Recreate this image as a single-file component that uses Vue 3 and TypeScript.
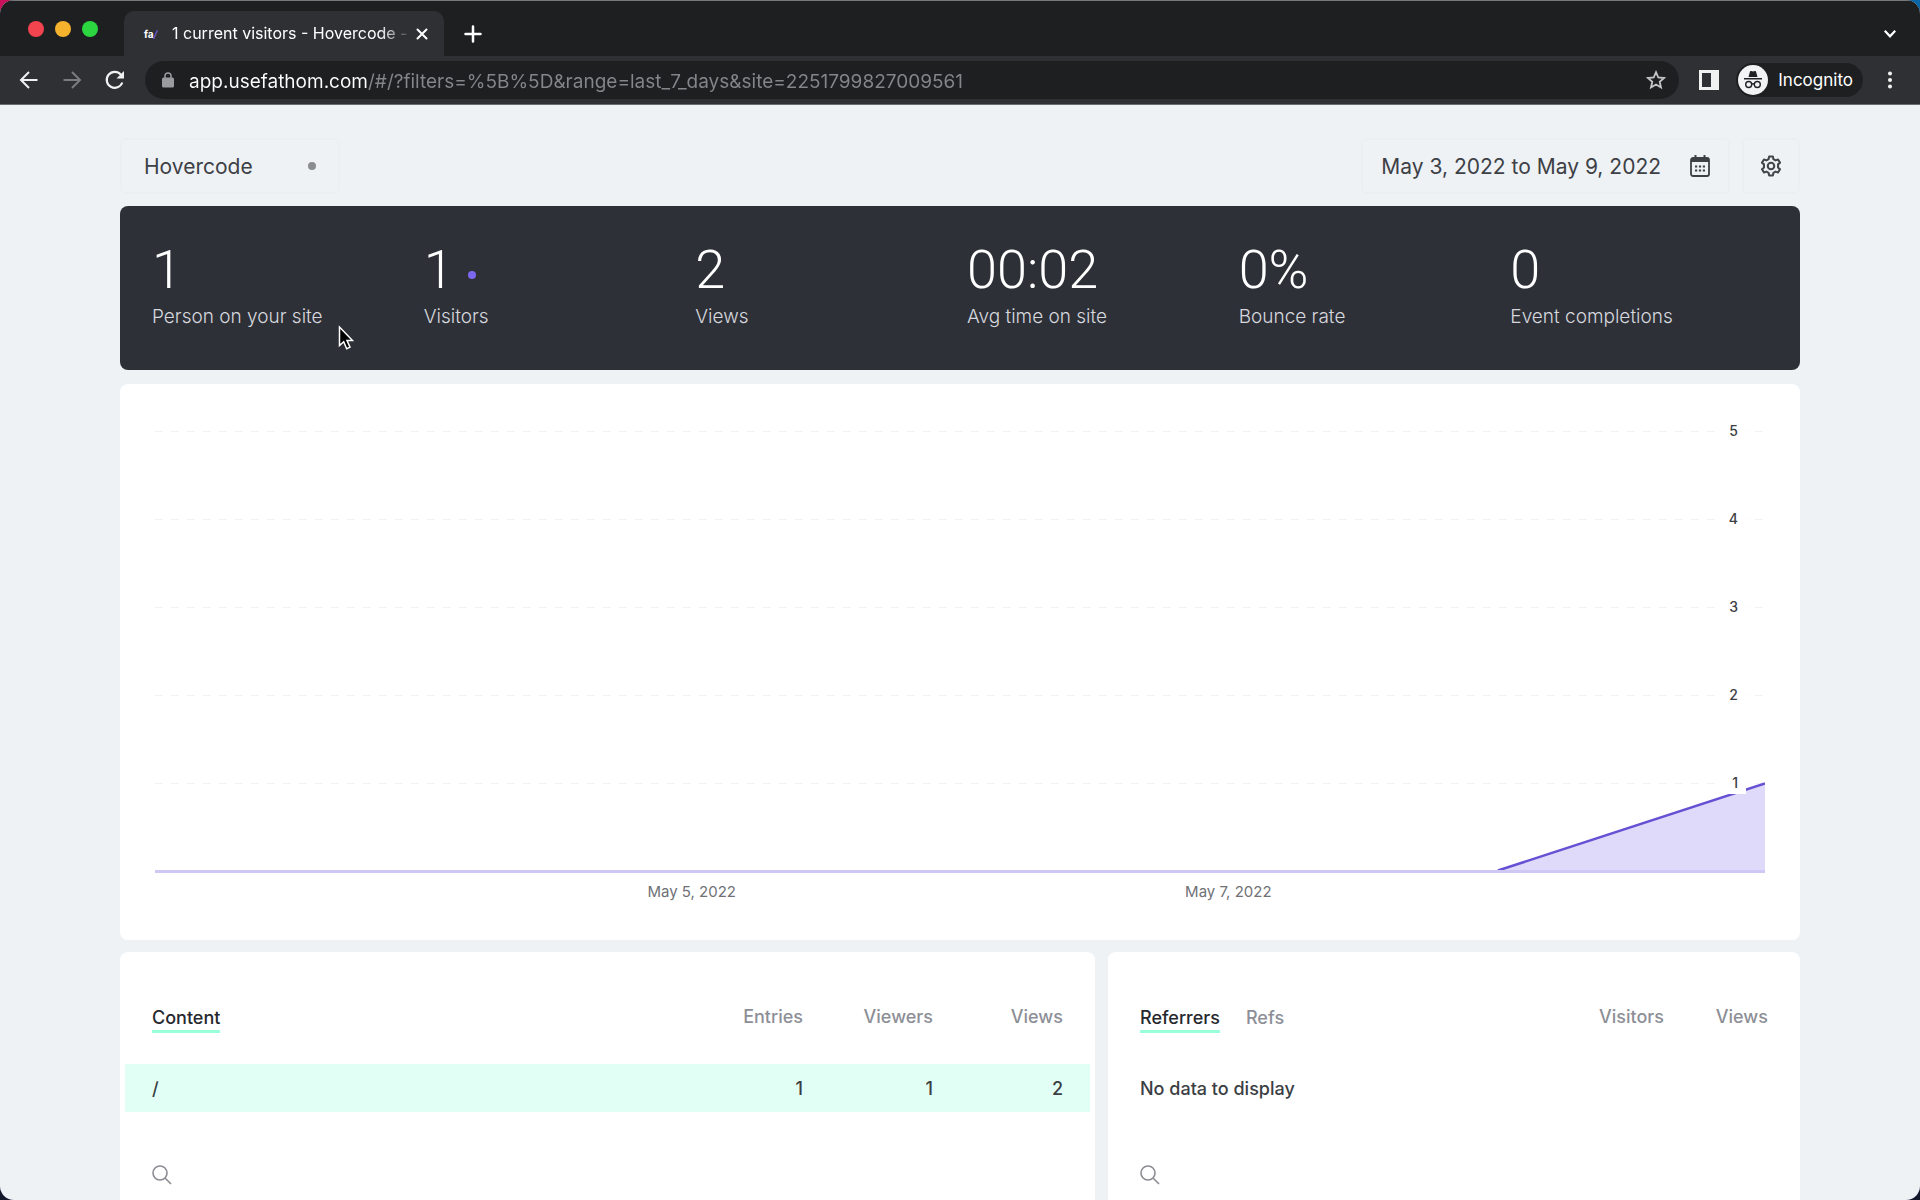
<script setup lang="ts">
import { ref } from 'vue'

interface Stat {
  value: string
  label: string
  live?: boolean
}

const stats: Stat[] = [
  { value: '1', label: 'Person on your site' },
  { value: '1', label: 'Visitors', live: true },
  { value: '2', label: 'Views' },
  { value: '00:02', label: 'Avg time on site' },
  { value: '0%', label: 'Bounce rate' },
  { value: '0', label: 'Event completions' },
]

const ticks: number[] = [5, 4, 3, 2, 1]
const dates: string[] = ['May 5, 2022', 'May 7, 2022']
const pages = [{ path: '/', entries: 1, viewers: 1, views: 2 }]
const address = ref('app.usefathom.com/#/?filters=%5B%5D&range=last_7_days&site=2251799827009561')
</script>

<template>
  <div class="desktop">
    <div class="window">
      <header class="tabstrip">
        <div class="lights">
          <button class="light red" aria-label="Close window"></button>
          <button class="light yellow" aria-label="Minimise window"></button>
          <button class="light green" aria-label="Zoom window"></button>
        </div>
        <div class="tab">
          <span class="favicon">fa<i>/</i></span>
          <span class="tab-title">1 current visitors - Hovercode -</span>
          <button class="plain tab-close" aria-label="Close tab">
            <svg width="12" height="12" viewBox="0 0 12 12"><path d="M1.5 1.5l9 9M10.5 1.5l-9 9" stroke="#fff" stroke-width="2" stroke-linecap="round" /></svg>
          </button>
        </div>
        <button class="plain new-tab" aria-label="New tab">
          <svg width="18" height="18" viewBox="0 0 18 18"><path d="M9 1.500v15M1.500 9h15" stroke="#fff" stroke-width="2.500" stroke-linecap="round" /></svg>
        </button>
        <button class="plain tab-search" aria-label="Search tabs">
          <svg width="14" height="10" viewBox="0 0 14 10"><path d="M1.800 1.800L7 7.300l5.200-5.500" fill="none" stroke="#fff" stroke-width="2.200" /></svg>
        </button>
      </header>

      <div class="toolbar">
        <nav class="nav">
          <button class="plain" aria-label="Back">
            <svg width="20" height="20" viewBox="0 0 20 20"><path d="M18.500 10H2.500M10 2L2 10l8 8" fill="none" stroke="#f1f1f2" stroke-width="2" /></svg>
          </button>
          <button class="plain" aria-label="Forward">
            <svg width="20" height="20" viewBox="0 0 20 20"><path d="M1.500 10h16M10 2l8 8-8 8" fill="none" stroke="#7b7c7f" stroke-width="2" /></svg>
          </button>
          <button class="plain" aria-label="Reload">
            <svg width="20" height="20" viewBox="0 0 20 20"><path d="M17.300 12.500A8 8 0 1 1 15.800 4.600L17 5.800" fill="none" stroke="#f1f1f2" stroke-width="2.200" /><path d="M19 1v7.500h-7.500z" fill="#f1f1f2" /></svg>
          </button>
        </nav>
        <div class="omnibox">
          <svg class="lock" width="12" height="16" viewBox="0 0 12 16"><rect x="0" y="5.500" width="12" height="10" rx="1.500" fill="#9a9b9e" /><path d="M3 6V4a3 3 0 0 1 6 0v2" fill="none" stroke="#9a9b9e" stroke-width="1.500" /></svg>
          <input v-model="address" class="address" type="text" aria-label="Address" spellcheck="false" />
          <button class="plain" aria-label="Bookmark this page">
            <svg width="20" height="20" viewBox="0 0 20 20"><path d="M10 2.200l2.300 5.300 5.700.5-4.300 3.800 1.300 5.700-5-3-5 3 1.300-5.700L2 8l5.700-.5z" fill="none" stroke="#c4c5c7" stroke-width="1.800" /></svg>
          </button>
        </div>
        <button class="plain" aria-label="Side panel">
          <svg width="20" height="20" viewBox="0 0 20 20"><path d="M0 0h20v20H0zM3 3v14h9V3z" fill="#f1f1f2" fill-rule="evenodd" /></svg>
        </button>
        <button class="incognito">
          <svg width="30" height="30" viewBox="0 0 30 30">
            <circle cx="15" cy="15" r="15" fill="#f1f3f4" />
            <path d="M10.500 12l1.500-5.500q.3-.8 1.200-.5l1.800.5 1.800-.5q.9-.3 1.200.5l1.500 5.500zM6 13h18v1.400H6z" fill="#202124" />
            <g fill="none" stroke="#202124" stroke-width="1.400"><circle cx="10.700" cy="19.500" r="3" /><circle cx="19.300" cy="19.500" r="3" /><path d="M13.700 19.200q1.300-.8 2.600 0" /></g>
          </svg>
          Incognito
        </button>
        <button class="plain" aria-label="Menu">
          <svg width="6" height="18" viewBox="0 0 6 18"><g fill="#f1f1f2"><circle cx="3" cy="2.500" r="2" /><circle cx="3" cy="9" r="2" /><circle cx="3" cy="15.500" r="2" /></g></svg>
        </button>
      </div>

      <main class="page">
        <div class="controls">
          <button class="control site">Hovercode <span class="dot"></span></button>
          <div class="right-controls">
            <button class="control range">
              May 3, 2022 to May 9, 2022
              <svg width="20" height="22" viewBox="0 0 20 22">
                <path d="M3 3h14a2 2 0 0 1 2 2v14a2 2 0 0 1-2 2H3a2 2 0 0 1-2-2V5a2 2 0 0 1 2-2z" fill="none" stroke="#3d4045" stroke-width="1.800" />
                <path d="M1 3.500h18V7H1zM4.500 0h2v4h-2zM13.500 0h2v4h-2z" fill="#3d4045" />
                <path d="M5 11.500h2.200M8.900 11.500h2.200M12.800 11.500H15M5 15.500h2.200M8.900 15.500h2.200M12.800 15.500H15" stroke="#3d4045" stroke-width="2.200" />
              </svg>
            </button>
            <button class="control settings" aria-label="Settings">
              <svg width="26" height="26" viewBox="0 0 24 24" fill="none" stroke="#43464b" stroke-width="1.900" stroke-linejoin="round">
                <path d="M9.800 4.600L10.300 2.300h3.400l.5 2.300 2 1.200 2.300-.8 1.800 2.900-1.800 1.600v2.800l1.800 1.700-1.800 2.900-2.300-.7-2 1.200-.5 2.300h-3.400l-.5-2.300-2-1.200-2.300.7L3.700 14l1.800-1.700V9.500L3.700 7.900 5.500 5l2.300.8z" transform="translate(0 1)" />
                <circle cx="12" cy="12" r="3" />
              </svg>
            </button>
          </div>
        </div>

        <section class="stats">
          <div v-for="s in stats" :key="s.label" class="stat">
            <div class="value">{{ s.value }}<span v-if="s.live" class="live"></span></div>
            <div class="label">{{ s.label }}</div>
          </div>
          <svg class="cursor" width="16" height="26" viewBox="0 0 16 26"><path d="M1.500 2v18.500l4.200-3.800 3 7 3.300-1.500-3-6.700h5.500z" fill="#000" stroke="#fff" stroke-width="1.500" /></svg>
        </section>

        <section class="card chart">
          <div class="plot">
            <svg class="lines" viewBox="0 0 1610 442" preserveAspectRatio="none">
              <path d="M0 .5H1610M0 88.500H1610M0 176.500H1610M0 264.500H1610M0 352.500H1610" stroke="#f3f3f4" stroke-width="1" stroke-dasharray="8 8" />
              <path d="M1344 440L1610 352.500V440z" fill="#dfd9fa" />
              <path d="M1343 439.500L1610 352.500" stroke="#6551d3" stroke-width="2.500" />
              <path d="M0 440.500H1610" stroke="#cfc7f4" stroke-width="3" />
            </svg>
            <div class="ticks">
              <span v-for="t in ticks" :key="t">{{ t }}</span>
            </div>
          </div>
          <div class="dates">
            <span v-for="d in dates" :key="d">{{ d }}</span>
          </div>
        </section>

        <div class="panels">
          <section class="card panel content">
            <table>
              <thead>
                <tr>
                  <th class="lead"><button class="tabbtn active">Content</button></th>
                  <th>Entries</th>
                  <th>Viewers</th>
                  <th>Views</th>
                </tr>
              </thead>
              <tbody>
                <tr v-for="p in pages" :key="p.path" class="hit">
                  <td class="lead"><a href="#/">{{ p.path }}</a></td>
                  <td>{{ p.entries }}</td>
                  <td>{{ p.viewers }}</td>
                  <td>{{ p.views }}</td>
                </tr>
              </tbody>
            </table>
            <button class="plain search" aria-label="Search content">
              <svg width="20" height="20" viewBox="0 0 20 20"><g fill="none" stroke="#8b8c92" stroke-width="1.600"><circle cx="8" cy="8" r="7" /><path d="M13 13l6 6" /></g></svg>
            </button>
          </section>

          <section class="card panel referrers">
            <table>
              <thead>
                <tr>
                  <th class="lead">
                    <button class="tabbtn active">Referrers</button>
                    <button class="tabbtn">Refs</button>
                  </th>
                  <th>Visitors</th>
                  <th>Views</th>
                </tr>
              </thead>
              <tbody>
                <tr>
                  <td class="lead" colspan="3">No data to display</td>
                </tr>
              </tbody>
            </table>
            <button class="plain search" aria-label="Search referrers">
              <svg width="20" height="20" viewBox="0 0 20 20"><g fill="none" stroke="#8b8c92" stroke-width="1.600"><circle cx="8" cy="8" r="7" /><path d="M13 13l6 6" /></g></svg>
            </button>
          </section>
        </div>
      </main>
    </div>
  </div>
</template>

<style>
body {
  margin: 0;
  background: #14182c;
}
</style>

<style scoped>
* {
  box-sizing: border-box;
}
.desktop {
  height: 100vh;
  background:
    linear-gradient(#c9105a, #c9105a) left top / 20px 20px no-repeat,
    linear-gradient(#0b66a8, #0b66a8) right top / 20px 20px no-repeat,
    #14182c;
  font-family: Inter, 'Liberation Sans', sans-serif;
}
.window {
  height: 100%;
  display: flex;
  flex-direction: column;
  overflow: hidden;
  border-radius: 14px;
  background: #eef2f5;
}
button {
  font: inherit;
  border: 0;
  padding: 0;
  margin: 0;
  background: none;
  color: inherit;
  cursor: pointer;
}
.plain {
  display: flex;
  align-items: center;
  justify-content: center;
}
svg {
  display: block;
  flex: none;
}

/* Browser chrome */
.tabstrip {
  height: 56px;
  flex: none;
  display: flex;
  align-items: flex-end;
  padding-right: 23px;
  background: #1e1f21;
  border-top: 1px solid #77787a;
}
.lights {
  width: 124px;
  height: 55px;
  display: flex;
  align-items: center;
  gap: 11px;
  padding-left: 28px;
}
.light {
  width: 16px;
  height: 16px;
  border-radius: 50%;
}
.red { background: #f1444f; }
.yellow { background: #f5b32d; }
.green { background: #2bd640; }
.tab {
  width: 320px;
  height: 45px;
  display: flex;
  align-items: center;
  padding: 0 16px 0 20px;
  border-radius: 10px 10px 0 0;
  background: #2f3034;
  color: #fff;
}
.favicon {
  width: 28px;
  font-size: 10px;
  font-weight: 700;
}
.favicon i {
  color: #6d5cd8;
}
.tab-title {
  flex: 1;
  padding-bottom: 2px;
  white-space: nowrap;
  font-size: 16px;
  -webkit-mask-image: linear-gradient(to right, #000 208px, transparent 240px);
  mask-image: linear-gradient(to right, #000 208px, transparent 240px);
}
.new-tab {
  height: 45px;
  margin-left: 20px;
}
.tab-search {
  height: 45px;
  margin-left: auto;
}
.toolbar {
  height: 49px;
  flex: none;
  display: flex;
  align-items: center;
  gap: 20px;
  padding: 0 27px 0 19px;
  background: #2f3034;
  border-bottom: 1px solid #6c6d70;
}
.nav {
  display: flex;
  gap: 23px;
}
.omnibox {
  flex: 1;
  height: 38px;
  display: flex;
  align-items: center;
  padding: 0 13px 0 17px;
  border-radius: 19px;
  background: #1e1f21;
}
.address {
  flex: 1;
  min-width: 0;
  height: 32px;
  margin-left: 15px;
  padding: 2px 0 0;
  border: 0;
  outline: 0;
  font: 19px/30px Inter, 'Liberation Sans', sans-serif;
  color: transparent;
  background: linear-gradient(to right, #fff 178px, #85868a 178px);
  -webkit-background-clip: text;
  background-clip: text;
}
.incognito {
  height: 34px;
  display: flex;
  align-items: center;
  gap: 10px;
  margin: 0 4px 0 -3px;
  padding: 0 10px 0 2px;
  border-radius: 17px;
  background: #1e1f21;
  color: #fff;
  font-size: 17px;
}

/* Dashboard */
.page {
  flex: 1;
  min-height: 0;
  display: flex;
  flex-direction: column;
  padding: 33px 120px 0;
  color: #3b3e43;
}
.controls {
  display: flex;
  justify-content: space-between;
  margin-bottom: 12px;
}
.right-controls {
  display: flex;
  gap: 12px;
}
.control {
  height: 56px;
  display: flex;
  align-items: center;
  justify-content: space-between;
  border: 2px solid #ebeff2;
  border-radius: 6px;
  font-size: 21px;
  color: #3d4045;
}
.site {
  width: 220px;
  padding: 0 22px;
}
.dot {
  width: 8px;
  height: 8px;
  border-radius: 50%;
  background: #8a8c90;
}
.range {
  gap: 29px;
  padding: 0 18px;
}
.settings {
  width: 58px;
  justify-content: center;
}
.stats {
  position: relative;
  flex: none;
  height: 164px;
  display: grid;
  grid-template-columns: repeat(6, 1fr);
  padding: 35px 18px 0 32px;
  border-radius: 8px;
  background: #2e3038;
}
.value {
  display: flex;
  align-items: center;
  gap: 14px;
  height: 58px;
  font-family: Roboto, Inter, sans-serif;
  font-size: 54px;
  font-weight: 300;
  line-height: 58px;
  color: #fff;
}
.live {
  width: 8px;
  height: 8px;
  margin-top: 10px;
  border-radius: 50%;
  background: #7b68ee;
}
.label {
  margin-top: 6px;
  font-size: 19px;
  font-weight: 300;
  line-height: 24px;
  color: #d6d8de;
}
.cursor {
  position: absolute;
  left: 218px;
  top: 119px;
}
.card {
  background: #fff;
  border-radius: 8px;
}
.chart {
  flex: none;
  height: 556px;
  margin-top: 14px;
  padding: 47px 35px 0;
}
.plot {
  position: relative;
  height: 442px;
}
.lines {
  width: 100%;
  height: 100%;
}
.ticks {
  position: absolute;
  top: -11px;
  right: 19px;
  width: 29px;
  display: flex;
  flex-direction: column;
  gap: 66px;
  font-size: 14px;
  font-weight: 500;
  line-height: 22px;
  text-align: right;
}
.ticks span {
  padding-right: 8px;
  background: #fff;
}
.dates {
  display: grid;
  grid-template-columns: 1fr 2fr 2fr 1fr;
  margin-top: 8px;
  font-size: 15px;
  line-height: 22px;
  text-align: center;
  color: #6f7176;
}
.dates span:first-child {
  grid-column: 2;
}
.panels {
  flex: 1;
  min-height: 0;
  display: grid;
  grid-template-columns: 975fr 692fr;
  gap: 13px;
  margin-top: 12px;
}
.panel {
  padding: 42px 5px 0;
  border-radius: 8px 8px 0 0;
}
table {
  width: 100%;
  table-layout: fixed;
  border-collapse: collapse;
  font-size: 18px;
  font-weight: 500;
  line-height: 24px;
}
th,
td {
  width: 130px;
  padding: 0;
  text-align: right;
  font-weight: 500;
}
th {
  height: 70px;
  padding-top: 11px;
  vertical-align: top;
  color: #8d8f97;
}
td {
  height: 48px;
  padding-top: 2px;
}
th:last-child,
td:last-child {
  width: 157px;
  padding-right: 27px;
}
.lead {
  width: auto;
  padding-left: 27px;
  text-align: left;
}
.referrers th:last-child {
  width: 131px;
}
.hit {
  background: #e2fff5;
}
a {
  color: inherit;
  text-decoration: none;
}
.tabbtn {
  height: 28px;
  margin-right: 26px;
  border-bottom: 3px solid transparent;
  vertical-align: top;
  line-height: 24px;
}
.tabbtn.active {
  color: #26282d;
  border-color: #98ffd9;
}
.search {
  margin: 53px 0 0 27px;
}
</style>
